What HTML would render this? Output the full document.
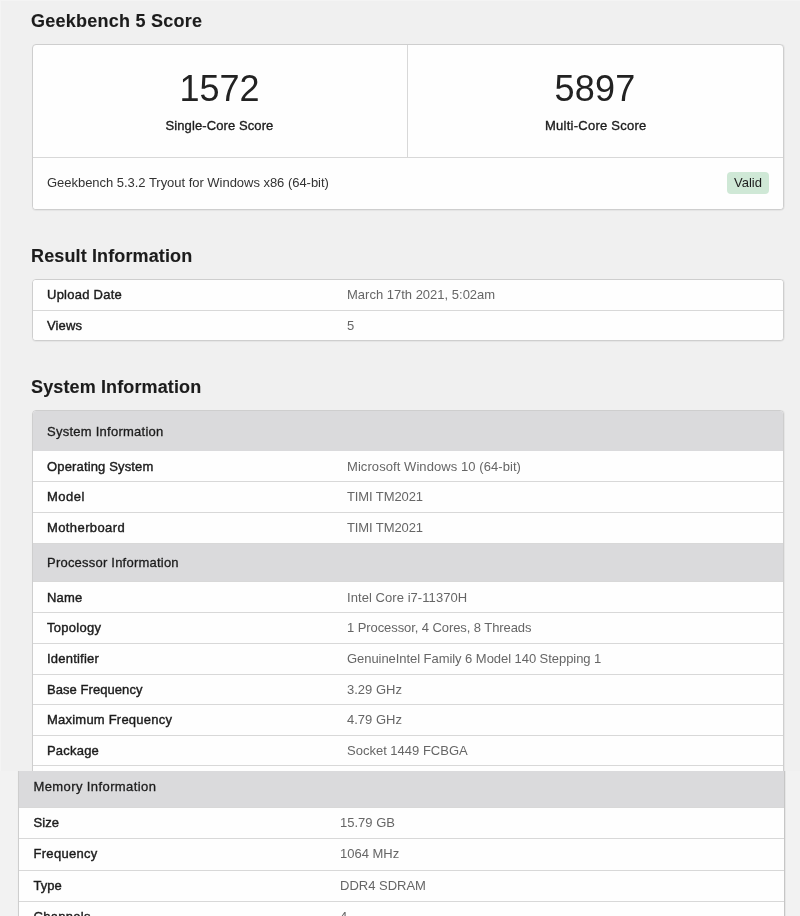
<!DOCTYPE html>
<html lang="en">
<head>
<meta charset="utf-8">
<title>Geekbench 5 Score</title>
<style>
*{box-sizing:border-box;margin:0;padding:0}
html,body{width:800px;height:916px;overflow:hidden;background:#f0f0f0}
body{font-family:"Liberation Sans",Arial,Helvetica,sans-serif;color:#222;position:relative;font-size:13px}
.top{will-change:transform;position:absolute;left:0;top:0;width:800px;height:771px;overflow:hidden;background:#f0f0f0}
.top::before{content:"";position:absolute;left:0;top:0;right:0;bottom:0;border-left:1px solid #f4f4f4;border-top:1px solid #f4f4f4}
.bot{will-change:transform;position:absolute;left:0;top:771px;width:800px;height:145px;overflow:hidden;background:#f2f2f2}
h2{position:absolute;left:31px;font-size:18px;font-weight:bold;line-height:20px;color:#1c1c1c;-webkit-text-stroke:.12px #1c1c1c;white-space:nowrap}
.card{position:absolute;left:32px;width:752px;background:#fefefe;border:1px solid #cecece;border-radius:4px;box-shadow:0 1px 1px rgba(0,0,0,.05),1px 0 0 rgba(0,0,0,.04);overflow:hidden}
.score{position:absolute;top:0;height:113px;text-align:center}
.score .n{position:absolute;left:0;right:2px;top:22px;font-size:36px;line-height:44px;color:#222}
.score .l{position:absolute;left:0;right:1px;top:73px;letter-spacing:.1px;font-size:13px;line-height:16px;color:#1c1c1c;-webkit-text-stroke:.35px #1c1c1c}
.row{position:absolute;left:0;right:0;border-top:1px solid #d8d8d8;background:#fefefe}
.row span{position:absolute;font-size:13px;line-height:16px;white-space:nowrap}
.k{left:14px;color:#1c1c1c;-webkit-text-stroke:.4px #1c1c1c}
.v{left:314px;color:#666}
.hd{background:#dadadc}
.hd .k{-webkit-text-stroke:.3px #1c1c1c}
.badge{right:14px;top:14px;width:42px;height:22px;line-height:21px!important;background:#cfe8d6;border-radius:4px;text-align:center;color:#1c1c1c}
</style>
</head>
<body>
<div class="top">
  <h2 style="top:11px;letter-spacing:.25px">Geekbench 5 Score</h2>
  <div class="card" style="top:44px;height:166px">
    <div class="score" style="left:0;width:375px;border-right:1px solid #d8d8d8"><div class="n" style="right:1px">1572</div><div class="l">Single-Core Score</div></div>
    <div class="score" style="left:375px;width:375px"><div class="n" style="right:1px;letter-spacing:.2px">5897</div><div class="l" style="right:-.5px;letter-spacing:.25px">Multi-Core Score</div></div>
    <div class="row" style="top:112px;height:52px"><span class="k" style="-webkit-text-stroke:0;color:#333;top:17px;letter-spacing:-.03px">Geekbench 5.3.2 Tryout for Windows x86 (64-bit)</span><span class="badge">Valid</span></div>
  </div>

  <h2 style="top:246px;letter-spacing:.13px">Result Information</h2>
  <div class="card" style="top:279px;height:62px">
    <div class="row" style="top:0px;height:31px;border-top:0"><span class="k" style="top:7px;letter-spacing:0.25px">Upload Date</span><span class="v" style="top:7px">March 17th 2021, 5:02am</span></div>
    <div class="row" style="top:30px;height:31px"><span class="k" style="top:7px;letter-spacing:0.12px">Views</span><span class="v" style="top:7px">5</span></div>
  </div>

  <h2 style="top:377px;letter-spacing:.13px">System Information</h2>
  <div class="card" style="top:410px;height:420px">
    <div class="row hd" style="top:0px;height:41px;border-top:0"><span class="k" style="top:13px;letter-spacing:0.25px">System Information</span></div>
    <div class="row" style="top:40px;height:31px;border-top-color:#fefefe"><span class="k" style="top:7px;letter-spacing:0.15px">Operating System</span><span class="v" style="top:7px;letter-spacing:0.07px">Microsoft Windows 10 (64-bit)</span></div>
    <div class="row" style="top:70px;height:31px"><span class="k" style="top:7px;letter-spacing:0.5px">Model</span><span class="v" style="top:7px;letter-spacing:-0.1px">TIMI TM2021</span></div>
    <div class="row" style="top:101px;height:31px"><span class="k" style="top:7px;letter-spacing:0.4px">Motherboard</span><span class="v" style="top:7px;letter-spacing:-0.1px">TIMI TM2021</span></div>
    <div class="row hd" style="top:132px;height:39px"><span class="k" style="top:11px;letter-spacing:0.22px">Processor Information</span></div>
    <div class="row" style="top:170px;height:32px"><span class="k" style="top:8px;letter-spacing:0.17px">Name</span><span class="v" style="top:8px;letter-spacing:0.06px">Intel Core i7-11370H</span></div>
    <div class="row" style="top:201px;height:32px"><span class="k" style="top:7px;letter-spacing:0.29px">Topology</span><span class="v" style="top:7px;letter-spacing:-0.08px">1 Processor, 4 Cores, 8 Threads</span></div>
    <div class="row" style="top:232px;height:32px"><span class="k" style="top:7px;letter-spacing:0.22px">Identifier</span><span class="v" style="top:7px;letter-spacing:-0.055px">GenuineIntel Family 6 Model 140 Stepping 1</span></div>
    <div class="row" style="top:263px;height:31px"><span class="k" style="top:7px;letter-spacing:0.06px">Base Frequency</span><span class="v" style="top:7px">3.29 GHz</span></div>
    <div class="row" style="top:293px;height:32px"><span class="k" style="top:7px;letter-spacing:0.22px">Maximum Frequency</span><span class="v" style="top:7px">4.79 GHz</span></div>
    <div class="row" style="top:324px;height:31px"><span class="k" style="top:7px;letter-spacing:0.2px">Package</span><span class="v" style="top:7px">Socket 1449 FCBGA</span></div>
    <div class="row" style="top:354px;height:40px"></div>
  </div>
</div>
<div class="bot">
  <div class="card" style="left:18px;width:767px;top:-2px;height:200px;border-radius:0;border-right-color:#c6c6c6">
    <div class="row hd" style="top:0px;height:38px;border-top:0"><span class="k" style="top:9px;letter-spacing:0.4px;left:14.5px">Memory Information</span></div>
    <div class="row" style="top:37px;height:32px"><span class="k" style="top:7px;letter-spacing:0.1px;left:14.5px">Size</span><span class="v" style="top:7px;left:321px">15.79 GB</span></div>
    <div class="row" style="top:68px;height:33px"><span class="k" style="top:7px;letter-spacing:0.3px;left:14.5px">Frequency</span><span class="v" style="top:7px;left:321px">1064 MHz</span></div>
    <div class="row" style="top:100px;height:32px"><span class="k" style="top:7px;letter-spacing:0.05px;left:14.5px">Type</span><span class="v" style="top:7px;left:321px">DDR4 SDRAM</span></div>
    <div class="row" style="top:131px;height:32px"><span class="k" style="top:7px;letter-spacing:0.3px;left:14.5px">Channels</span><span class="v" style="top:7px;left:321px">4</span></div>
  </div>
</div>
</body>
</html>
